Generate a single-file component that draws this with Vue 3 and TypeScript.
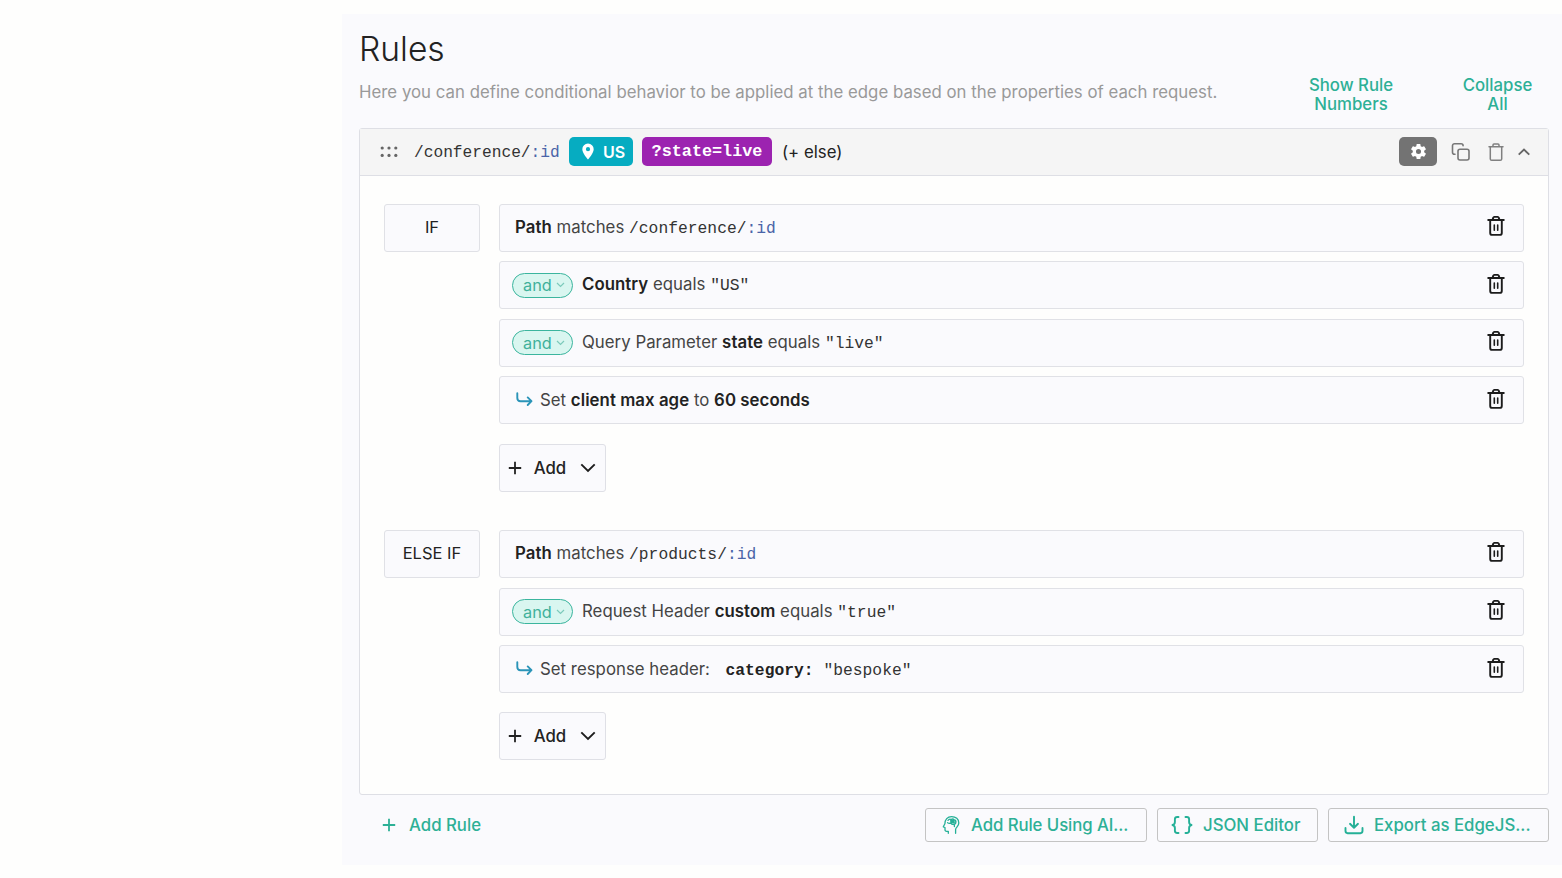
<script setup lang="ts">
type TokenKind = 'text' | 'strong' | 'code' | 'param' | 'codeStrong'

interface Token {
  kind: TokenKind
  value: string
}

interface Row {
  lead: 'none' | 'and' | 'action'
  tokens: Token[]
}

interface Branch {
  label: string
  rows: Row[]
}

const t = (kind: TokenKind, value: string): Token => ({ kind, value })

const branches: Branch[] = [
  {
    label: 'IF',
    rows: [
      { lead: 'none', tokens: [t('strong', 'Path'), t('text', ' matches '), t('code', '/conference/'), t('param', ':id')] },
      { lead: 'and', tokens: [t('strong', 'Country'), t('text', ' equals '), t('code', '"US"')] },
      { lead: 'and', tokens: [t('text', 'Query Parameter '), t('strong', 'state'), t('text', ' equals '), t('code', '"live"')] },
      { lead: 'action', tokens: [t('text', 'Set '), t('strong', 'client max age'), t('text', ' to '), t('strong', '60 seconds')] },
    ],
  },
  {
    label: 'ELSE IF',
    rows: [
      { lead: 'none', tokens: [t('strong', 'Path'), t('text', ' matches '), t('code', '/products/'), t('param', ':id')] },
      { lead: 'and', tokens: [t('text', 'Request Header '), t('strong', 'custom'), t('text', ' equals '), t('code', '"true"')] },
      { lead: 'action', tokens: [t('text', 'Set response header: '), t('codeStrong', ' category:'), t('code', ' "bespoke"')] },
    ],
  },
]
</script>

<template>
  <main class="panel">
    <h1 class="title">Rules</h1>
    <div class="intro">
      <p class="lead">Here you can define conditional behavior to be applied at the edge based on the properties of each request.</p>
      <button class="link numbers">Show Rule<br />Numbers</button>
      <button class="link collapse">Collapse<br />All</button>
    </div>

    <section class="card">
      <header class="card-head">
        <svg class="grip" width="18" height="12" viewBox="0 0 18 12">
          <g fill="#666">
            <circle cx="2.2" cy="2" r="1.6" /><circle cx="9" cy="2" r="1.6" /><circle cx="15.8" cy="2" r="1.6" />
            <circle cx="2.2" cy="9.4" r="1.6" /><circle cx="9" cy="9.4" r="1.6" /><circle cx="15.8" cy="9.4" r="1.6" />
          </g>
        </svg>
        <span class="code path">/conference/<span class="param">:id</span></span>
        <span class="badge country">
          <svg width="12" height="17" viewBox="0 0 12 17">
            <path fill="#fff" fill-rule="evenodd" d="M6 .5A5.7 5.7 0 0 0 .3 6.200C.3 10.200 6 16.500 6 16.500s5.700-6.300 5.700-10.300A5.700 5.700 0 0 0 6 .5Zm0 3.600a2.100 2.100 0 1 1 0 4.200 2.100 2.100 0 0 1 0-4.200Z" />
          </svg>
          US
        </span>
        <span class="badge state">?state=live</span>
        <span class="else">(+ else)</span>
        <button class="gear">
          <svg width="19" height="19" viewBox="0 0 24 24">
            <path fill="#fff" d="M19.140 12.940c.04-.3.06-.61.06-.94s-.02-.64-.07-.94l2.030-1.580a.49.49 0 0 0 .12-.61l-1.920-3.320a.49.49 0 0 0-.59-.22l-2.390.96c-.5-.38-1.030-.7-1.620-.94L14.400 2.810a.48.48 0 0 0-.48-.41h-3.840a.47.47 0 0 0-.47.41l-.36 2.540c-.59.24-1.130.57-1.620.94l-2.390-.96a.48.48 0 0 0-.59.22L2.740 8.870a.47.47 0 0 0 .12.61l2.030 1.580c-.05.3-.09.63-.09.94s.02.64.07.94l-2.030 1.580a.49.49 0 0 0-.12.61l1.920 3.320c.12.22.37.29.59.22l2.390-.96c.5.38 1.030.7 1.620.94l.36 2.540c.05.24.24.41.48.41h3.840c.24 0 .44-.17.47-.41l.36-2.540c.59-.24 1.130-.56 1.620-.94l2.390.96c.22.08.47 0 .59-.22l1.920-3.320a.47.47 0 0 0-.12-.61l-2.010-1.580ZM12 15.200a3.200 3.200 0 1 1 0-6.400 3.200 3.200 0 0 1 0 6.400Z" />
          </svg>
        </button>
        <svg class="copy" width="20" height="20" viewBox="0 0 20 20" fill="none" stroke="#777" stroke-width="1.600" stroke-linecap="round" stroke-linejoin="round">
          <rect x="7" y="7.300" width="11" height="10.700" rx="2" />
          <path d="M4 12.300H3.500a2 2 0 0 1-2-2V3.700a2 2 0 0 1 2-2h6.600a2 2 0 0 1 2 2" />
        </svg>
        <svg class="bin" width="18" height="20" viewBox="0 0 18 20" fill="none" stroke="#808080" stroke-width="1.500" stroke-linecap="round" stroke-linejoin="round">
          <path d="M2 4.700h14M6 4.500V2.900Q6 1.900 7 1.900h4q1 0 1 1v1.600M3.300 4.900v12q0 1.400 1.400 1.400h8.600q1.400 0 1.400-1.400v-12" />
        </svg>
        <svg class="up" width="14" height="10" viewBox="0 0 14 10" fill="none" stroke="#666" stroke-width="1.900">
          <path d="M1.700 7.600 7 2.600l5.300 5" />
        </svg>
      </header>

      <div class="card-body">
        <div v-for="branch in branches" :key="branch.label" class="branch">
          <div class="label">{{ branch.label }}</div>
          <div class="rows">
            <div v-for="(row, i) in branch.rows" :key="i" class="row" :class="row.lead">
              <button v-if="row.lead === 'and'" class="pill">
                and
                <svg width="9" height="6" viewBox="0 0 9 6" fill="none" stroke="#7ccabb" stroke-width="1.200"><path d="M1 1l3.500 3.500L8 1" /></svg>
              </button>
              <svg v-if="row.lead === 'action'" class="arrow" width="18" height="16" viewBox="0 0 18 16" fill="none" stroke="#2a94b8" stroke-width="1.900" stroke-linecap="round" stroke-linejoin="round">
                <path d="M2.300 1.300v4.700q0 3.200 3.200 3.200h10.600M12.700 5.400l3.800 3.800-3.800 3.800" />
              </svg>
              <span class="sentence"><span v-for="(token, j) in row.tokens" :key="j" :class="token.kind">{{ token.value }}</span></span>
              <svg class="trash" width="20" height="22" viewBox="0 0 20 22" fill="none" stroke="#1c1c1c" stroke-width="1.900" stroke-linecap="round" stroke-linejoin="round">
                <path d="M2.200 5h15.600M6.500 4.800 7.300 2.700Q7.500 1.900 8.300 1.900h3.400q.8 0 1 .8l.8 2.100M4.200 5.200v12.700q0 2 2 2h7.600q2 0 2-2V5.200" />
                <path d="M8.300 10v5.300M11.700 10v5.300" stroke-width="1.600" />
              </svg>
            </div>
            <button class="add">
              <svg width="14" height="14" viewBox="0 0 14 14" stroke="#222" stroke-width="1.800"><path d="M7 .8v12.400M.8 7h12.400" /></svg>
              <span>Add</span>
              <svg width="16" height="10" viewBox="0 0 16 10" fill="none" stroke="#1c1c1c" stroke-width="1.900"><path d="M1.300 1.300 8 8l6.700-6.700" /></svg>
            </button>
          </div>
        </div>
      </div>
    </section>

    <footer class="foot">
      <button class="add-rule">
        <svg width="14" height="14" viewBox="0 0 14 14" stroke="#2db096" stroke-width="1.800"><path d="M7 .8v12.400M.8 7h12.400" /></svg>
        Add Rule
      </button>
      <button class="action-btn ai">
        <svg width="18" height="20" viewBox="0 0 18 20" fill="none" stroke="#24b097" stroke-width="1.300" stroke-linecap="round" stroke-linejoin="round">
          <path d="M6.300 18.300v-2H4.600q-1.600 0-1.600-1.600v-2.200l-1.700-.7 1.600-3C2.800 4.500 5.500 1.600 9.600 1.600c4.200 0 7.200 2.600 7.200 6.300 0 3.600-3.200 4.500-3.200 6.600v3.800" />
          <path d="M6 5.400q1.500-2 3.200-.9 1.600-1.200 3 .3 1.900.3 1.600 2.200.4 1.800-1.500 2.200l.1 2.300M5.600 7.700q1.600 1.200 3.300.2 1.100 2.300 3.400 1.100M9.200 4.600v3.300M12 5.400l-1 1.500 2.700.3" />
          <path fill="#24b097" d="m8.800 4.800 2.400.5.800 2.600-2.800-.2Z" />
        </svg>
        <span>Add Rule Using AI...</span>
      </button>
      <button class="action-btn json">
        <svg width="22" height="20" viewBox="0 0 22 20" fill="none" stroke="#24b097" stroke-width="1.900" stroke-linecap="round" stroke-linejoin="round">
          <path d="M7.500 2H6.300Q3.900 2 3.900 4.200v2.700Q3.900 9.300 1.500 10q2.400.7 2.400 3.100v2.700Q3.900 18 6.300 18h1.200M14.500 2h1.200q2.400 0 2.400 2.200v2.700q0 2.400 2.400 3.100-2.400.7-2.400 3.100v2.700q0 2.200-2.400 2.200h-1.200" />
        </svg>
        <span>JSON Editor</span>
      </button>
      <button class="action-btn export">
        <svg width="20" height="20" viewBox="0 0 20 20" fill="none" stroke="#24b097" stroke-width="1.900" stroke-linecap="round" stroke-linejoin="round">
          <path d="M10 1.700v10.800M6 8.800l4 3.900 4-3.900M1.500 13v3.100q0 2.100 2.100 2.100h12.800q2.100 0 2.100-2.100V13" />
        </svg>
        <span>Export as EdgeJS...</span>
      </button>
    </footer>
  </main>
</template>

<style>
body {
  background: #fefefd;
}
</style>

<style scoped>
* {
  box-sizing: border-box;
}

.panel {
  margin: 14px 0 0 342px;
  width: 1220px;
  height: 851px;
  padding: 0 13px 0 17px;
  background: #fafafd;
  color: #222;
  font-family: Inter, "Liberation Sans", sans-serif;
  font-size: 16.8px;
}

svg {
  flex: none;
  display: block;
}

button {
  padding: 0;
  border: 0;
  background: none;
  color: inherit;
  font: inherit;
}

.title {
  margin: 0;
  padding-top: 14px;
  height: 58px;
  font-size: 33.6px;
  font-weight: 350;
  line-height: 42px;
}

.intro {
  display: flex;
  height: 56px;
}

.lead {
  flex: none;
  margin: 0;
  padding-top: 8px;
  width: 917px;
  line-height: 25px;
  letter-spacing: 0.018px;
  color: #999;
  white-space: nowrap;
}

.link {
  flex: none;
  align-self: flex-start;
  margin-top: 4px;
  line-height: 19px;
  font-weight: 500;
  color: #2db096;
  text-align: center;
}

.numbers {
  width: 150px;
}

.collapse {
  width: 143px;
}

.card {
  height: 667px;
  border: 1px solid #dedfe5;
  border-radius: 3px;
  background: #fefefd;
}

.card-head {
  display: flex;
  align-items: center;
  height: 47px;
  padding: 0 17px 0 20px;
  border-bottom: 1px solid #dedfe5;
  background: #f5f5f5;
}

.code,
.codeStrong,
.param {
  font-family: "Liberation Mono", monospace;
  font-size: 16.3px;
}

.code {
  color: #333;
}

.param {
  color: #4a64a8;
}

.path {
  width: 146px;
  padding-top: 2px;
  font-size: 16.2px;
}

.path .param {
  font-size: 16.2px;
}

.grip {
  margin-right: 16px;
}

.badge {
  display: flex;
  align-items: center;
  height: 29px;
  margin-bottom: 1px;
  border-radius: 5px;
  color: #fff;
}

.country {
  width: 64px;
  margin-left: 9px;
  padding-left: 13px;
  gap: 9px;
  background: #06acc1;
  font-size: 16px;
  font-weight: 600;
}

.state {
  width: 130px;
  margin-left: 9px;
  justify-content: center;
  padding-bottom: 1px;
  background: #9c23b0;
  font: 700 16.8px "Liberation Mono", monospace;
}

.else {
  margin-left: 10px;
  font-size: 16.8px;
}

.gear {
  display: flex;
  align-items: center;
  justify-content: center;
  width: 38px;
  height: 29px;
  margin-left: auto;
  margin-bottom: 1px;
  border-radius: 5px;
  background: #737373;
}

.copy {
  margin-left: 14px;
}

.bin {
  margin-left: 16px;
}

.up {
  margin-left: 12px;
}

.card-body {
  display: flex;
  flex-direction: column;
  gap: 38.4px;
  padding: 27.6px 24px 0;
}

.branch {
  display: flex;
  align-items: flex-start;
  gap: 19px;
}

.label {
  display: flex;
  align-items: center;
  justify-content: center;
  width: 96px;
  height: 48px;
  padding-bottom: 1px;
  border: 1px solid #e0e1e6;
  border-radius: 3px;
  background: #fafafd;
  font-size: 16.5px;
}

.rows {
  display: flex;
  flex: 1;
  flex-direction: column;
  gap: 9.6px;
}

.row {
  display: flex;
  align-items: center;
  height: 48px;
  padding: 0 17px 0 15px;
  border: 1px solid #e0e1e6;
  border-radius: 3px;
  background: #fafafd;
}

.row.and {
  padding-left: 12px;
}

.sentence {
  padding-bottom: 1px;
  white-space: pre;
  letter-spacing: 0.02px;
  color: #444;
}

.row.action .sentence {
  padding-bottom: 0;
}

.strong {
  font-weight: 600;
  letter-spacing: 0.06px;
  color: #222;
}

.codeStrong {
  margin-left: 1px;
  font-weight: 700;
  color: #222;
}

.pill {
  display: flex;
  align-items: center;
  gap: 4px;
  width: 61px;
  height: 25px;
  margin-right: 9px;
  padding-left: 10px;
  border: 1.5px solid #3bb59e;
  border-radius: 13px;
  background: #d9f6f0;
  color: #3fb19b;
  font-size: 16.3px;
}

.arrow {
  margin-right: 7px;
}

.trash {
  margin-left: auto;
  margin-bottom: 3px;
}

.add {
  display: flex;
  align-items: center;
  width: 107px;
  height: 48px;
  margin-top: 9.6px;
  padding-left: 8px;
  border: 1px solid #dfe0e6;
  border-radius: 3px;
  background: #fafafd;
  font-weight: 500;
}

.add span {
  width: 34px;
  margin: 0 13px 0 11px;
}

.foot {
  display: flex;
  align-items: center;
  padding-top: 13px;
  color: #2db096;
  font-weight: 500;
}

.add-rule {
  display: flex;
  align-items: center;
  gap: 13px;
  margin-left: 23px;
  margin-right: auto;
}

.action-btn {
  display: flex;
  align-items: center;
  height: 34px;
  margin-left: 10px;
  border: 1px solid #c4c4c4;
  border-radius: 3px;
  white-space: nowrap;
}

.ai {
  width: 222px;
  padding-left: 16px;
  gap: 11px;
  letter-spacing: -0.08px;
}

.json {
  width: 161px;
  padding-left: 13px;
  gap: 10px;
}

.export {
  width: 221px;
  padding-left: 15px;
  gap: 10px;
}
</style>
